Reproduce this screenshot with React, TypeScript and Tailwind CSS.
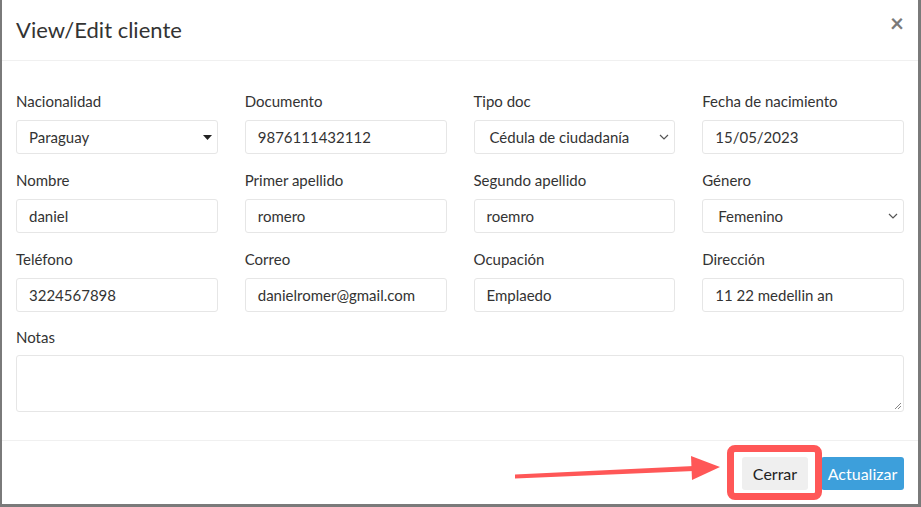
import React from 'react';

const FONT = { fontFamily: 'Lato, "Open Sans", sans-serif' } as const;

function Label({ children }: { children: React.ReactNode }) {
  return <div className="mb-[9px] h-5 text-[15px] leading-5 text-[#333]">{children}</div>;
}

function TextField({ label, value }: { label: string; value: string }) {
  return (
    <div>
      <Label>{label}</Label>
      <div className="flex h-[34px] items-center rounded-[3px] border border-[#e6e6e6] px-3 text-[15px] text-[#333]">
        {value}
      </div>
    </div>
  );
}

function Chevron() {
  return (
    <svg width="10" height="6" viewBox="0 0 10 6" className="shrink-0">
      <path d="M1 1l4 4 4-4" fill="none" stroke="#555" strokeWidth="1.2" />
    </svg>
  );
}

function SelectField({ label, value, caret }: { label: string; value: string; caret?: boolean }) {
  return (
    <div>
      <Label>{label}</Label>
      <div
        className={`flex h-[34px] items-center justify-between rounded-[3px] border border-[#e6e6e6] text-[15px] text-[#333] ${
          caret ? 'pl-3 pr-[5px]' : 'pl-[15px] pr-[5px]'
        }`}
      >
        <span>{value}</span>
        {caret ? (
          <svg width="9" height="5" viewBox="0 0 9 5" className="shrink-0">
            <path d="M0 0h9L4.5 5z" fill="#222" />
          </svg>
        ) : (
          <Chevron />
        )}
      </div>
    </div>
  );
}

export default function App() {
  return (
    <div
      style={FONT}
      className="relative h-[507px] w-[921px] overflow-hidden border-b-[3px] border-l-2 border-r-[3px] border-[#7a7a7a] bg-white"
    >
      {/* header */}
      <div className="flex h-[61px] items-center justify-between border-b border-[#f0f0f0] px-[14px]">
        <h1 className="-mt-[2px] text-[22px] text-[#333]">View/Edit cliente</h1>
        <span className="-mt-[14px] text-[24px] font-bold leading-none text-[#7a7a7a]">×</span>
      </div>

      {/* body */}
      <div className="px-[14px] pb-[28px] pt-[30px]">
        <div className="grid grid-cols-4 gap-x-[27px] gap-y-4">
          <SelectField label="Nacionalidad" value="Paraguay" caret />
          <TextField label="Documento" value="9876111432112" />
          <SelectField label="Tipo doc" value="Cédula de ciudadanía" />
          <TextField label="Fecha de nacimiento" value="15/05/2023" />

          <TextField label="Nombre" value="daniel" />
          <TextField label="Primer apellido" value="romero" />
          <TextField label="Segundo apellido" value="roemro" />
          <SelectField label="Género" value="Femenino" />

          <TextField label="Teléfono" value="3224567898" />
          <TextField label="Correo" value="danielromer@gmail.com" />
          <TextField label="Ocupación" value="Emplaedo" />
          <TextField label="Dirección" value="11 22 medellin an" />

          <div className="col-span-4 -mt-px">
            <Label>Notas</Label>
            <div className="relative -mt-px h-[57px] rounded-[3px] border border-[#e6e6e6]">
              <svg width="8" height="8" viewBox="0 0 8 8" className="absolute bottom-[1px] right-[1px]">
                <path d="M7 1L1 7M7 4L4 7" stroke="#888" strokeWidth="1" />
              </svg>
            </div>
          </div>
        </div>
      </div>

      {/* footer */}
      <div className="flex justify-end gap-[13px] border-t border-[#f0f0f0] pr-[14px] pt-[16px]">
        <button className="h-[33px] w-[66px] rounded-[3px] bg-[#efefef] text-[16px] text-[#222]">Cerrar</button>
        <button className="h-[33px] w-[83px] rounded-[3px] bg-[#3d9fdb] text-[16px] text-white">Actualizar</button>
      </div>

      {/* annotation: highlight box */}
      <div className="pointer-events-none absolute left-[725px] top-[445px] h-[55px] w-[95px] rounded-[8px] border-[7px] border-[#ff5757]" />

      {/* annotation: arrow */}
      <svg
        className="pointer-events-none absolute left-0 top-0"
        width="921"
        height="507"
        viewBox="0 0 921 507"
      >
        <path d="M513 474.5L692 466L692 471L513 478.5Z" fill="#ff5757" />
        <path d="M689 456L718 467L690 480Z" fill="#ff5757" />
      </svg>
    </div>
  );
}
